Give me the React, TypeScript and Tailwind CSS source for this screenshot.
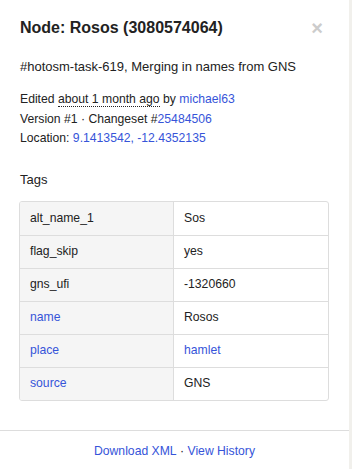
import React from "react"

const tags: { k: string; v: string; kLink?: boolean; vLink?: boolean }[] = [
  { k: "alt_name_1", v: "Sos" },
  { k: "flag_skip", v: "yes" },
  { k: "gns_ufi", v: "-1320660" },
  { k: "name", v: "Rosos", kLink: true },
  { k: "place", v: "hamlet", kLink: true, vLink: true },
  { k: "source", v: "GNS", kLink: true },
]

const link = "text-[#3654d9]"

export default function App() {
  return (
    <div className="flex w-[352px] h-[469px] bg-white text-[#222] font-['Liberation_Sans',Arial,sans-serif]">
      <div className="flex flex-col flex-1 h-full">
        <div className="px-5 pt-[17px] flex-1">
          <div className="flex items-center justify-between">
            <h2 className="text-[16px] leading-[22px] font-bold">Node: Rosos (3080574064)</h2>
            <span className="text-[#ccc] text-[20px] leading-[22px] font-bold mr-[6px]">×</span>
          </div>
          <p className="mt-[18px] text-[13px] leading-[20px]">#hotosm-task-619, Merging in names from GNS</p>
          <div className="mt-[13px] text-[12.2px] leading-[19.5px]">
            <div>
              Edited <span className="border-b border-dotted border-[#222]">about 1 month ago</span> by{" "}
              <span className={link}>michael63</span>
            </div>
            <div>
              Version #1 · Changeset #<span className={link}>25484506</span>
            </div>
            <div>
              Location: <span className={link}>9.1413542, -12.4352135</span>
            </div>
          </div>
          <h4 className="mt-[21px] text-[13px] leading-[20px]">Tags</h4>
          <div className="mt-[11px] -ml-px w-[310px] border border-[#ddd] rounded-[3px] overflow-hidden text-[12.2px]">
            {tags.map((t, i) => (
              <div key={t.k} className={`grid grid-cols-2 h-[33px] ${i > 0 ? "border-t border-[#ddd]" : ""}`}>
                <div className={`bg-[#f5f5f5] border-r border-[#ddd] pl-[10px] flex items-center ${t.kLink ? link : ""}`}>
                  {t.k}
                </div>
                <div className={`pl-[10px] flex items-center ${t.vLink ? link : ""}`}>{t.v}</div>
              </div>
            ))}
          </div>
        </div>
        <div className="border-t border-[#ddd] h-[39px] pt-[3px] flex items-center justify-center text-[12.2px]">
          <span className={link}>Download XML</span>
          <span className="whitespace-pre"> · </span>
          <span className={link}>View History</span>
        </div>
      </div>
      <div className="w-[3px] h-full bg-[#f1f0ec]" />
    </div>
  )
}
